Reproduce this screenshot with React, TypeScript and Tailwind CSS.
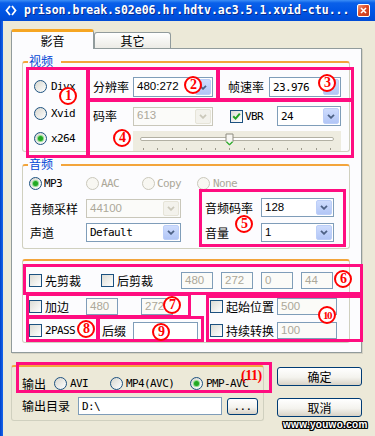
import React from "react";

const MONO = "font-['DejaVu_Sans_Mono',monospace] text-[11px] tracking-[-0.6px]";
const SANS = "font-['Liberation_Sans',sans-serif] text-[11.5px]";
const GROUP =
  "relative shrink-0 rounded-[3px] border border-[#D0D0BF] border-t-2 border-t-[#F3A53C]";

function Chevron({ disabled }: { disabled?: boolean }) {
  return (
    <svg width="8" height="5" viewBox="0 0 8 5">
      <path
        d="M1 0.8 L4 3.8 L7 0.8"
        fill="none"
        stroke={disabled ? "#CBC8BA" : "#4D6185"}
        strokeWidth="1.8"
      />
    </svg>
  );
}

function Combo({
  className,
  value,
  disabled,
  font,
}: {
  className: string;
  value: string;
  disabled?: boolean;
  font: string;
}) {
  return (
    <div
      className={`${className} shrink-0 flex border ${
        disabled ? "border-[#C9C7BA] bg-[#FBFBF9]" : "border-[#7F9DB9] bg-white"
      }`}
    >
      <span
        className={`flex-1 pl-[3px] flex items-center overflow-hidden whitespace-nowrap ${
          disabled ? "text-[#ACA899]" : "text-black"
        } ${font}`}
      >
        {value}
      </span>
      <span
        className={`w-[16px] m-[1px] rounded-[2px] flex items-center justify-center border ${
          disabled
            ? "bg-[#F3F2EC] border-[#E6E4D8]"
            : "bg-[linear-gradient(to_bottom,#CEDCFD,#B2C6F6)] border-[#BCCEF8]"
        }`}
      >
        <Chevron disabled={disabled} />
      </span>
    </div>
  );
}

function Field({
  className,
  value,
  disabled,
  font,
}: {
  className: string;
  value: string;
  disabled?: boolean;
  font?: string;
}) {
  return (
    <div
      className={`${className} shrink-0 border border-[#7F9DB9] flex items-center pl-[3px] whitespace-nowrap ${
        disabled ? "bg-[#FBFBF8] text-[#ACA899]" : "bg-white text-black"
      } ${font ?? SANS}`}
    >
      {value}
    </div>
  );
}

function Check({ checked }: { checked?: boolean }) {
  return (
    <span className="w-[13px] h-[13px] shrink-0 border border-[#1C5180] bg-[linear-gradient(135deg,#DCDCD5,#FFFFFF)] flex items-center justify-center">
      {checked && (
        <svg width="9" height="9" viewBox="0 0 9 9">
          <path d="M1.2 4.2 L3.6 6.6 L7.8 1.6" stroke="#21A121" strokeWidth="2" fill="none" />
        </svg>
      )}
    </span>
  );
}

function Radio({ checked, disabled }: { checked?: boolean; disabled?: boolean }) {
  return (
    <span
      className={`w-[13px] h-[13px] shrink-0 rounded-full border flex items-center justify-center ${
        disabled
          ? "border-[#CAC8BB] bg-[#F8F7F2]"
          : "border-[#1C5180] bg-[linear-gradient(135deg,#D6D6CE,#FFFFFF)]"
      }`}
    >
      {checked && (
        <span className="w-[5px] h-[5px] rounded-full bg-[#22A822] shadow-[0_0_0_1px_#8EDB8E]" />
      )}
    </span>
  );
}

function Btn({ className, children }: { className: string; children: React.ReactNode }) {
  return (
    <div
      className={`${className} shrink-0 rounded-[3px] border border-[#003C74] bg-[linear-gradient(to_bottom,#FFFFFF,#F4F3EE_55%,#D8D2C6)] flex items-center justify-center`}
    >
      {children}
    </div>
  );
}

function Num({ className, n, small }: { className: string; n: string; small?: boolean }) {
  return (
    <div
      className={`${className} absolute w-[18px] h-[18px] rounded-full border-2 border-[#FF0000] bg-white text-[#FF0000] flex items-center justify-center font-['Liberation_Serif',serif] font-bold leading-none pointer-events-none ${
        small ? "text-[11px] tracking-[-1.5px]" : "text-[14px] tracking-[-1px]"
      }`}
    >
      {n}
    </div>
  );
}

const ticks = Array.from({ length: 14 }, (_, i) => i);

export default function App() {
  return (
    <div className="relative w-[375px] h-[436px] overflow-hidden bg-[#ECE9D8] text-[12px] text-black font-['Noto_Sans_CJK_SC',sans-serif] leading-none">
      {/* Title bar */}
      <div className="h-[21px] flex items-center px-[5px] bg-[linear-gradient(to_bottom,#3C8EF6_0%,#0A60E9_14%,#0056E6_50%,#004BD5_100%)]">
        <svg width="12" height="11" viewBox="0 0 12 11" className="shrink-0">
          <path
            d="M5 1 L1.5 5.5 L5 10 M7 1 L10.5 5.5 L7 10"
            stroke="white"
            strokeWidth="1.8"
            fill="none"
          />
        </svg>
        <span className="ml-[7px] text-white font-bold text-[11.5px] font-['DejaVu_Sans_Mono',monospace] whitespace-nowrap [text-shadow:1px_1px_0_#0A2A8A]">
          prison.break.s02e06.hr.hdtv.ac3.5.1.xvid-ctu...
        </span>
        <span className="ml-auto w-[13px] h-[13px] rounded-[2px] border border-white bg-[linear-gradient(135deg,#F09A7F,#DD4A26_45%,#C23A1C)] flex items-center justify-center">
          <svg width="7" height="7" viewBox="0 0 7 7">
            <path d="M1 1 L6 6 M6 1 L1 6" stroke="white" strokeWidth="1.6" />
          </svg>
        </span>
      </div>

      <div className="flex h-[415px]">
        <div className="w-[3px] shrink-0 bg-[linear-gradient(to_right,#0041C9,#1666EE)]" />
        <div className="pl-[8px] pt-[8px] flex flex-col">
          {/* Tabs */}
          <div className="flex items-end h-[19px]">
            <div className="relative z-10 -mb-px w-[83px] h-[20px] bg-[#FCFCFE] border-x border-[#919B9C] rounded-t-[3px] border-t-[3px] border-t-[#F6A623] flex items-center justify-center">
              影音
            </div>
            <div className="w-[77px] h-[16px] rounded-t-[3px] border border-b-0 border-[#919B9C] bg-[linear-gradient(to_bottom,#FFFFFF,#ECEBE6)] flex items-center justify-center">
              其它
            </div>
          </div>

          {/* Panel */}
          <div className="w-[351px] h-[305px] shrink-0 border border-[#919B9C] bg-[#FCFCFE] shadow-[1px_1px_0_#D5D2C3] flex flex-col">
            {/* 视频 */}
            <div className={`${GROUP} mt-[12px] ml-[10px] w-[328px] h-[91px] flex`}>
              <span className="absolute -top-[9px] left-[5px] pl-[1px] pr-[8px] bg-[#FCFCFE] text-[#0046D5] leading-[14px]">
                视频
              </span>
              <div className="w-[70px] shrink-0 pl-[11px] flex flex-col">
                <div className="mt-[17px] flex items-center gap-[4px]">
                  <Radio />
                  <span className={MONO}>Divx</span>
                </div>
                <div className="mt-[14px] flex items-center gap-[4px]">
                  <Radio />
                  <span className={MONO}>Xvid</span>
                </div>
                <div className="mt-[12px] flex items-center gap-[4px]">
                  <Radio checked />
                  <span className={MONO}>x264</span>
                </div>
              </div>
              <div className="flex flex-col pt-[14px]">
                <div className="flex items-center h-[20px]">
                  <span className="w-[40px]">分辨率</span>
                  <Combo className="w-[80px] h-[20px]" value="480:272" font={SANS} />
                  <span className="ml-[15px] w-[41px]">帧速率</span>
                  <Combo className="w-[72px] h-[20px]" value="23.976" font={MONO} />
                </div>
                <div className="mt-[9px] flex items-center h-[20px]">
                  <span className="w-[40px]">码率</span>
                  <Combo className="w-[80px] h-[19px]" value="613" disabled font={SANS} />
                  <span className="ml-[17px]">
                    <Check checked />
                  </span>
                  <span className={`ml-[2px] w-[32px] ${MONO}`}>VBR</span>
                  <Combo className="w-[64px] h-[20px]" value="24" font={MONO} />
                </div>
                <div className="relative mt-[5px] ml-[40px] w-[208px] h-[20px] bg-[#EEECE0] flex flex-col">
                  <div className="mx-[7px] mt-[6px] h-[4px] rounded-full border border-[#B2B0A3] bg-white" />
                  <div className="mt-[7px] px-[10px] flex justify-between">
                    {ticks.map((t) => (
                      <span key={t} className="w-px h-[2px] bg-[#9D9A8C]" />
                    ))}
                  </div>
                  <svg
                    width="9"
                    height="13"
                    viewBox="0 0 9 13"
                    className="absolute left-[92px] top-[2px]"
                  >
                    <path
                      d="M1 1 H8 V8.5 L4.5 12 L1 8.5 Z"
                      fill="#F7F6F1"
                      stroke="#8E8C80"
                      strokeWidth="1"
                    />
                    <path d="M1.5 8.8 L4.5 11.6 L7.5 8.8" fill="none" stroke="#2BB52B" strokeWidth="1.2" />
                  </svg>
                </div>
              </div>
            </div>

            {/* 音频 */}
            <div className={`${GROUP} mt-[12px] ml-[10px] w-[328px] h-[85px] flex flex-col`}>
              <span className="absolute -top-[9px] left-[5px] pl-[1px] pr-[8px] bg-[#FCFCFE] text-[#0046D5] leading-[14px]">
                音频
              </span>
              <div className="mt-[11px] pl-[6px] flex items-center h-[13px]">
                <div className="w-[57px] flex items-center gap-[2px]">
                  <Radio checked />
                  <span className={MONO}>MP3</span>
                </div>
                <div className="w-[56px] flex items-center gap-[2px]">
                  <Radio disabled />
                  <span className={`${MONO} text-[#ACA899]`}>AAC</span>
                </div>
                <div className="w-[55px] flex items-center gap-[2px]">
                  <Radio disabled />
                  <span className={`${MONO} text-[#ACA899]`}>Copy</span>
                </div>
                <div className="flex items-center gap-[3px]">
                  <Radio disabled />
                  <span className={`${MONO} text-[#ACA899]`}>None</span>
                </div>
              </div>
              <div className="mt-[9px] pl-[7px] flex">
                <div className="flex flex-col gap-[5px]">
                  <div className="flex items-center">
                    <span className="w-[56px]">音频采样</span>
                    <Combo className="w-[95px] h-[19px]" value="44100" disabled font={SANS} />
                  </div>
                  <div className="flex items-center">
                    <span className="w-[56px]">声道</span>
                    <Combo className="w-[95px] h-[19px]" value="Default" font={MONO} />
                  </div>
                </div>
                <div className="ml-[24px] -mt-[1px] flex flex-col gap-[6px]">
                  <div className="flex items-center">
                    <span className="w-[56px]">音频码率</span>
                    <Combo className="w-[73px] h-[19px]" value="128" font={SANS} />
                  </div>
                  <div className="flex items-center">
                    <span className="w-[56px]">音量</span>
                    <Combo className="w-[73px] h-[19px]" value="1" font={SANS} />
                  </div>
                </div>
              </div>
            </div>

            {/* Third group */}
            <div className={`${GROUP} mt-[10px] ml-[10px] w-[328px] h-[84px] flex flex-col`}>
              <div className="mt-[11px] pl-[6px] flex items-center h-[17px]">
                <div className="w-[72px] flex items-center gap-[3px]">
                  <Check />
                  <span>先剪裁</span>
                </div>
                <div className="w-[80px] flex items-center gap-[3px]">
                  <Check />
                  <span>后剪裁</span>
                </div>
                <Field className="w-[32px] h-[17px]" value="480" disabled />
                <Field className="ml-[8px] w-[32px] h-[17px]" value="272" disabled />
                <Field className="ml-[8px] w-[32px] h-[17px]" value="0" disabled />
                <Field className="ml-[8px] w-[32px] h-[17px]" value="44" disabled />
              </div>
              <div className="mt-[9px] flex">
                <div className="w-[180px] shrink-0 pl-[6px] flex flex-col gap-[7px]">
                  <div className="flex items-center h-[17px]">
                    <div className="w-[57px] flex items-center gap-[3px]">
                      <Check />
                      <span>加边</span>
                    </div>
                    <Field className="w-[32px] h-[17px]" value="480" disabled />
                    <Field className="ml-[23px] w-[32px] h-[17px]" value="272" disabled />
                  </div>
                  <div className="flex items-center h-[17px]">
                    <div className="w-[73px] flex items-center gap-[3px]">
                      <Check />
                      <span className={MONO}>2PASS</span>
                    </div>
                    <span className="w-[31px]">后缀</span>
                    <Field className="w-[65px] h-[18px]" value="" />
                  </div>
                </div>
                <div className="pl-[7px] flex flex-col gap-[7px]">
                  <div className="flex items-center h-[17px]">
                    <div className="w-[67px] flex items-center gap-[3px]">
                      <Check />
                      <span>起始位置</span>
                    </div>
                    <Field className="w-[60px] h-[17px]" value="500" disabled />
                  </div>
                  <div className="flex items-center h-[17px]">
                    <div className="w-[67px] flex items-center gap-[3px]">
                      <Check />
                      <span>持续转换</span>
                    </div>
                    <Field className="w-[60px] h-[17px]" value="100" disabled />
                  </div>
                </div>
              </div>
            </div>
          </div>

          {/* Bottom row */}
          <div className="mt-[12px] flex">
            <div className="w-[253px] h-[56px] rounded-[3px] border border-[#D0D0BF] border-t-2 border-t-[#F3A53C] flex flex-col pl-[10px]">
              <div className="mt-[10px] flex items-center h-[13px]">
                <span className="w-[32px]">输出</span>
                <div className="w-[56px] flex items-center gap-[3px]">
                  <Radio />
                  <span className={MONO}>AVI</span>
                </div>
                <div className="w-[80px] flex items-center gap-[3px]">
                  <Radio />
                  <span className={MONO}>MP4(AVC)</span>
                </div>
                <div className="flex items-center gap-[3px]">
                  <Radio checked />
                  <span className={MONO}>PMP-AVC</span>
                </div>
              </div>
              <div className="mt-[7px] flex items-center">
                <span className="w-[56px]">输出目录</span>
                <Field className="w-[144px] h-[18px]" value="D:\" font={MONO} />
                <Btn className="ml-[5px] w-[31px] h-[17px]">
                  <span className={MONO}>...</span>
                </Btn>
              </div>
            </div>
            <div className="ml-[13px] flex flex-col">
              <Btn className="mt-[2px] w-[85px] h-[19px]">确定</Btn>
              <Btn className="mt-[12px] w-[85px] h-[19px]">取消</Btn>
            </div>
          </div>
        </div>
      </div>

      {/* Annotation overlays */}
      <div className="absolute pointer-events-none border-[3px] border-[#FF0D80] left-[26px] top-[67px] w-[63px] h-[91px]" />
      <div className="absolute pointer-events-none border-[3px] border-[#FF0D80] left-[87px] top-[67px] w-[132px] h-[34px]" />
      <div className="absolute pointer-events-none border-[3px] border-[#FF0D80] left-[217px] top-[67px] w-[137px] h-[34px]" />
      <div className="absolute pointer-events-none border-[3px] border-[#FF0D80] left-[87px] top-[99px] w-[267px] h-[59px]" />
      <div className="absolute pointer-events-none border-[3px] border-[#FF0D80] left-[199px] top-[189px] w-[147px] h-[58px]" />
      <div className="absolute pointer-events-none border-[3px] border-[#FF0D80] left-[23px] top-[264px] w-[340px] h-[31px]" />
      <div className="absolute pointer-events-none border-[3px] border-[#FF0D80] left-[26px] top-[293px] w-[165px] h-[25px]" />
      <div className="absolute pointer-events-none border-[3px] border-[#FF0D80] left-[26px] top-[316px] w-[73px] h-[26px]" />
      <div className="absolute pointer-events-none border-[3px] border-[#FF0D80] left-[97px] top-[316px] w-[107px] h-[26px]" />
      <div className="absolute pointer-events-none border-[3px] border-[#FF0D80] left-[206px] top-[295px] w-[157px] h-[47px]" />
      <div className="absolute pointer-events-none border-[3px] border-[#FF0D80] left-[16px] top-[362px] w-[256px] h-[31px]" />

      <Num className="left-[59px] top-[87px]" n="1" />
      <Num className="left-[184px] top-[76px]" n="2" />
      <Num className="left-[318px] top-[74px]" n="3" />
      <Num className="left-[113px] top-[129px]" n="4" />
      <Num className="left-[235px] top-[215px]" n="5" />
      <Num className="left-[334px] top-[270px]" n="6" />
      <Num className="left-[163px] top-[296px]" n="7" />
      <Num className="left-[77px] top-[320px]" n="8" />
      <Num className="left-[152px] top-[323px]" n="9" />
      <Num className="left-[318px] top-[306px]" n="10" small />
      <span className="absolute left-[241px] top-[369px] text-[#FF0000] font-['Liberation_Serif',serif] font-bold text-[14px] tracking-[-0.5px] leading-none pointer-events-none">
        (11)
      </span>

      <span className="absolute left-[283px] top-[420px] text-white font-['Liberation_Sans',sans-serif] font-bold text-[10px] tracking-[0.3px] leading-none pointer-events-none [text-shadow:1px_0_0_#000,-1px_0_0_#000,0_1px_0_#000,0_-1px_0_#000,1px_1px_0_#000,-1px_-1px_0_#000,1px_-1px_0_#000,-1px_1px_0_#000]">
        www.youwo.com
      </span>
    </div>
  );
}
